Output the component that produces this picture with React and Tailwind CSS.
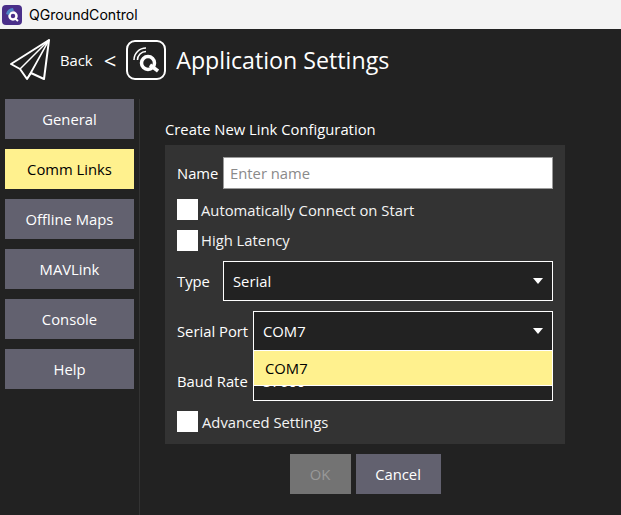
const navItems = ["General", "Comm Links", "Offline Maps", "MAVLink", "Console", "Help"];

const PlaneIcon = () => (
  <svg width="41" height="42" viewBox="0 0 41 42" fill="none" stroke="white" strokeWidth="2" strokeLinejoin="round">
    <path d="M39 1 L1 25 L10 30 L17 40 L21 34 L34 40 Z" />
    <path d="M39 1 L10 30 M39 1 L17 40 M39 1 L21 34" strokeWidth="1.5" />
  </svg>
);

const AppIcon = () => (
  <svg width="20" height="20" viewBox="0 0 20 20">
    <rect width="20" height="20" rx="4" fill="#4a2f8a" />
    <circle cx="11" cy="11" r="3.5" fill="none" stroke="white" strokeWidth="2.5" />
    <path d="M4 9 A7 7 0 0 1 11 3 L12 6 A5 5 0 0 0 7 10 Z" fill="#4f86c6" />
    <path d="M12.5 13 L16 16" stroke="white" strokeWidth="2" />
  </svg>
);

const QLogo = () => (
  <svg width="26" height="26" viewBox="0 0 26 26" fill="none">
    <circle cx="15" cy="16" r="6.5" stroke="white" strokeWidth="3.5" />
    <path d="M17 18 L25 24" stroke="white" strokeWidth="3.5" />
    <path d="M1 13 A12 12 0 0 1 13 1 M4.5 13 A8.5 8.5 0 0 1 13 4.5" stroke="white" strokeWidth="1.6" />
  </svg>
);

const Caret = () => (
  <div className="ml-auto w-0 h-0 border-l-[5px] border-r-[5px] border-t-[6px] border-l-transparent border-r-transparent border-t-white" />
);

const Check = ({ label, gap, labelClass }) => (
  <div className={`flex items-center h-[21px] ${gap}`}>
    <div className="w-[21px] h-[21px] bg-white" />
    <span className={`text-[14.8px] text-[#f4f4f4] ${labelClass}`}>{label}</span>
  </div>
);

export default function App() {
  return (
    <div className="w-[621px] h-[515px] overflow-hidden flex flex-col bg-[#222222] text-white font-['Open_Sans',sans-serif]">
      <div className="h-[29px] shrink-0 bg-[#f3f3f3] flex items-center pl-[2px] gap-[7px] text-black">
        <AppIcon />
        <span className="text-[14.1px] font-['Inter',sans-serif]">QGroundControl</span>
      </div>

      <div className="h-[62px] shrink-0 flex items-center pl-[10px]">
        <PlaneIcon />
        <span className="ml-[9px] text-[14.8px]">Back</span>
        <span className="ml-[11px] text-[22px]">&lt;</span>
        <div className="ml-[10px] w-[40px] h-[40px] rounded-[9px] border-2 border-white flex items-center justify-center">
          <QLogo />
        </div>
        <span className="ml-[10px] text-[23.2px]">Application Settings</span>
      </div>

      <div className="flex flex-1 pt-[8px]">
        <div className="w-[140px] h-full border-r border-[#333333] pl-[5px] flex flex-col gap-[10px]">
          {navItems.map((item) => (
            <div
              key={item}
              className={
                item === "Comm Links"
                  ? "w-[129px] h-10 pt-[1px] flex items-center justify-center text-[14.8px] bg-[#fff18e] text-black"
                  : "w-[129px] h-10 pt-[1px] flex items-center justify-center text-[14.8px] bg-[#62616f] text-white"
              }
            >
              {item}
            </div>
          ))}
        </div>

        <div className="pl-[25px] pt-[20px]">
          <div className="text-[14.8px] leading-[20px]">Create New Link Configuration</div>
          <div className="mt-[6px] w-[400px] h-[299px] bg-[#333333] px-[12px] pt-[12px] flex flex-col gap-[10px]">
            <div className="flex items-center h-[32px]">
              <span className="w-[46px] text-[14.8px]">Name</span>
              <div className="w-[330px] h-[32px] bg-white border border-[#9a9a9a] flex items-center pl-[6px] text-[14.8px] text-[#8a8a8a]">
                Enter name
              </div>
            </div>
            <Check label="Automatically Connect on Start" gap="gap-[3px]" labelClass="pt-[2px]" />
            <Check label="High Latency" gap="gap-[3px]" labelClass="" />
            <div className="flex items-center h-[40px]">
              <span className="w-[46px] text-[14.8px]">Type</span>
              <div className="w-[330px] h-[40px] border border-white bg-[#222222] flex items-center pl-[9px] pr-[9px] text-[14.8px]">
                Serial
                <Caret />
              </div>
            </div>
            <div className="flex items-center h-[40px] relative">
              <span className="w-[76px] text-[14.8px] whitespace-nowrap">Serial Port</span>
              <div className="w-[300px] h-[40px] border border-white bg-[#222222] flex items-center pl-[9px] pr-[9px] text-[14.8px]">
                COM7
                <Caret />
              </div>
              <div className="absolute left-[76px] top-[39px] w-[300px] h-[36px] border border-white bg-[#fff18e] flex items-center pl-[11px] text-[14.8px] text-black z-10">
                COM7
              </div>
            </div>
            <div className="flex items-center h-[40px]">
              <span className="w-[76px] text-[14.8px] whitespace-nowrap">Baud Rate</span>
              <div className="w-[300px] h-[40px] border border-white bg-[#222222] flex items-center pl-[9px] text-[14.8px]">
                57600
              </div>
            </div>
            <Check label="Advanced Settings" gap="gap-[4px]" labelClass="pt-[2px]" />
          </div>
          <div className="mt-[10px] flex justify-center gap-[5px]">
            <div className="w-[61px] h-10 pt-[1px] bg-[#737373] text-[#999999] flex items-center justify-center text-[14.8px]">OK</div>
            <div className="w-[85px] h-10 pt-[1px] bg-[#62616f] flex items-center justify-center text-[14.8px]">Cancel</div>
          </div>
        </div>
      </div>
    </div>
  );
}
